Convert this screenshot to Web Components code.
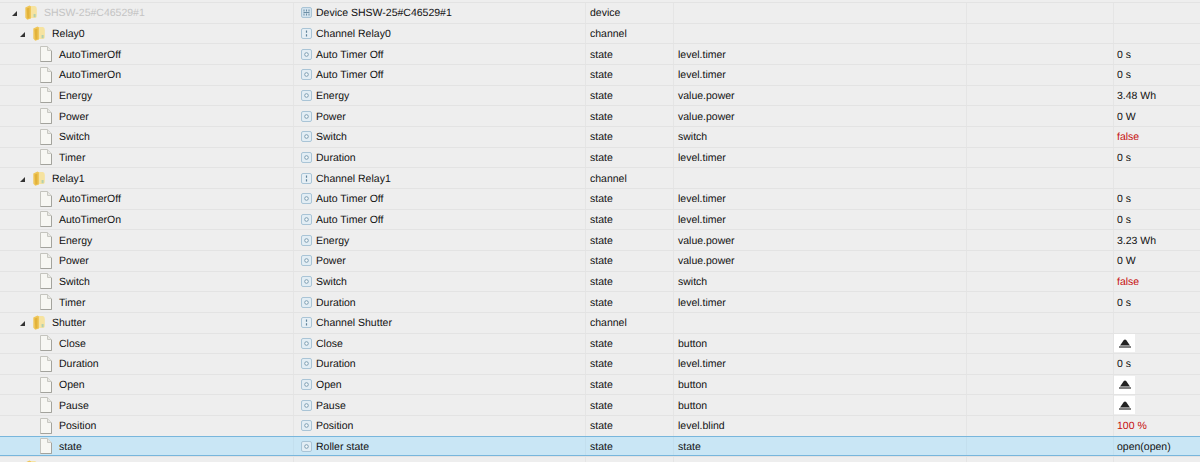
<!DOCTYPE html>
<html><head><meta charset="utf-8"><style>
html,body{margin:0;padding:0;background:#eeeeee;overflow:hidden;height:462px}
body{font:10.5px "Liberation Sans",Arial,sans-serif;color:#111;text-rendering:geometricPrecision}
</style></head><body>
<tree-table></tree-table>
<script>
const ICONS={
folder:`<svg width="12" height="15" viewBox="0 0 12 15"><path d="M3.5 1 H10 Q11.8 1.5 11.8 4 V11 Q11.8 13 10 13 H5.5Z" fill="#f6e3a0"/><path d="M.3 2.5 L4.5 .5 L6 1.5 V13.5 L2.2 14.8 L.3 12.5Z" fill="#efc65a"/><path d="M1.6 3.5 L4.5 2.5 V13 L2.4 13.7Z" fill="#e2b23a"/><rect x="8.6" y="9" width="2" height="3.2" fill="#b3d0ae"/></svg>`,
file:`<svg width="12" height="16" viewBox="0 0 12 16"><path d="M.5.5H7.5L11.5 4.5V15.5H.5Z" fill="#f7f7f3" stroke="#c4c4be"/><path d="M7.5.5V4.5H11.5" fill="#e8e8e3" stroke="#c8c8c2"/><path d="M.5 15.5H11.5V5" fill="none" stroke="#a3a39d"/></svg>`,
device:`<svg width="11" height="11" viewBox="0 0 11 11"><rect x=".5" y=".5" width="10" height="10" rx="1.5" fill="#d3e3ee" stroke="#a9c4d6"/><path d="M3 2.5v2M3 6.5v2M5.5 2.5v2M5.5 6.5v2M8 2.5v2M8 6.5v2M2.5 5.5h6" stroke="#6e8fa6" fill="none"/></svg>`,
channel:`<svg width="11" height="11" viewBox="0 0 11 11"><rect x=".5" y=".5" width="10" height="10" rx="1.5" fill="#e6eff5" stroke="#a9c4d6"/><path d="M5.5 2.5v2.2M5.5 6.3v2.2" stroke="#5f8299" stroke-width="1.2"/></svg>`,
state:`<svg width="11" height="11" viewBox="0 0 11 11"><rect x=".5" y=".5" width="10" height="10" rx="1.5" fill="#e2edf4" stroke="#a9c4d6"/><circle cx="5.5" cy="5.5" r="1.8" fill="#f4f8fa" stroke="#7d9db2"/></svg>`,
eject:`<svg width="12" height="9" viewBox="0 0 12 9"><path d="M1 6.5 L4.8 1 Q6 0 7.2 1 L11 6.5Z" fill="#222"/><rect x="0" y="7" width="12" height="2" fill="#808080"/></svg>`
};
class TreeTwisty extends HTMLElement{
 constructor(){super();this.attachShadow({mode:'open'}).innerHTML=`<style>:host{display:block;width:5px;height:5px;flex:none}svg{display:block}</style><svg width="5" height="5" viewBox="0 0 5 5"><path d="M5 0V5H0Z" fill="#333"/></svg>`}
}
customElements.define('tree-twisty',TreeTwisty);
class TreeIcon extends HTMLElement{
 constructor(){super();this.attachShadow({mode:'open'}).innerHTML=`<style>:host{display:flex;flex:none}svg{display:block}</style>${ICONS[this.getAttribute('name')]}`}
}
customElements.define('tree-icon',TreeIcon);
class TreeRow extends HTMLElement{
 connectedCallback(){
  const [lvl,name,ic,title,type,role,val]=JSON.parse(this.getAttribute('data'));
  const r=this.attachShadow({mode:'open'});
  const btn=val==='@';
  const valHtml=btn?`<span class="btn"><tree-icon name="eject"></tree-icon></span>`:(val||'');
  const cls=(val==='false'||val==='100 %')?'red':'';
  const pad=[12,20,40][lvl];
  r.innerHTML=`<style>
  :host{display:grid;grid-template-columns:293px 292px 88px 293px 147px 87px;height:20.667px;box-sizing:border-box;border-top:1px solid #e3e3e3}
  :host([sel]){background:#c9e6f5;border-top:1.5px solid #78b6dc;border-bottom:1.5px solid #78b6dc}
  .c{border-left:1px solid #e5e5e5;display:flex;align-items:center;padding-left:4px;box-sizing:border-box;white-space:nowrap;overflow:hidden;min-width:0}
  span{position:relative;top:.5px}
  :host([sel]) .c{border-left-color:#c3dfee}
  .c.name{border-left:0;padding-left:${pad}px}
  .c.title{padding-left:7px;gap:4px}
  .c.val{padding-left:3px}
  tree-twisty{margin-right:8px;margin-top:2px}
  .n{margin-left:7px}
  .dim{color:#c4c4c4}
  .red{color:#c60f0f}
  .c.nb{padding-left:0}
  .btn{display:flex;width:21px;height:18px;top:0;background:#fff;align-items:center;justify-content:center}
  </style>
  <div class="c name">${lvl<2?'<tree-twisty></tree-twisty>':''}<tree-icon name="${lvl<2?'folder':'file'}"></tree-icon><span class="n ${lvl===0?'dim':''}">${name}</span></div>
  <div class="c title"><tree-icon name="${ic}"></tree-icon><span>${title}</span></div>
  <div class="c"><span>${type}</span></div><div class="c"><span>${role}</span></div><div class="c"></div>
  <div class="c val ${cls} ${btn?'nb':''}">${btn?valHtml:`<span>${valHtml}</span>`}</div>`;
 }
}
customElements.define('tree-row',TreeRow);
class TreeTable extends HTMLElement{
 connectedCallback(){
  const S=(n,t,ro,v)=>[2,n,'state',t,'state',ro,v];
  const relay=en=>[S('AutoTimerOff','Auto Timer Off','level.timer','0 s'),S('AutoTimerOn','Auto Timer Off','level.timer','0 s'),S('Energy','Energy','value.power',en),S('Power','Power','value.power','0 W'),S('Switch','Switch','switch','false'),S('Timer','Duration','level.timer','0 s')];
  const rows=[[0,'SHSW-25#C46529#1','device','Device SHSW-25#C46529#1','device','',''],
  [1,'Relay0','channel','Channel Relay0','channel','',''],...relay('3.48 Wh'),
  [1,'Relay1','channel','Channel Relay1','channel','',''],...relay('3.23 Wh'),
  [1,'Shutter','channel','Channel Shutter','channel','',''],
  S('Close','Close','button','@'),S('Duration','Duration','level.timer','0 s'),S('Open','Open','button','@'),S('Pause','Pause','button','@'),S('Position','Position','level.blind','100 %'),S('state','Roller state','state','open(open)')];
  const r=this.attachShadow({mode:'open'});
  r.innerHTML=`<style>:host{display:block;padding-top:2px}</style>`;
  rows.forEach((d,i)=>{const e=document.createElement('tree-row');e.setAttribute('data',JSON.stringify(d));if(i===rows.length-1)e.setAttribute('sel','');r.appendChild(e)});
  const e=document.createElement('tree-row');e.setAttribute('data',JSON.stringify([0,'','device','','','','']));r.appendChild(e);
 }
}
customElements.define('tree-table',TreeTable);
</script></body></html>
